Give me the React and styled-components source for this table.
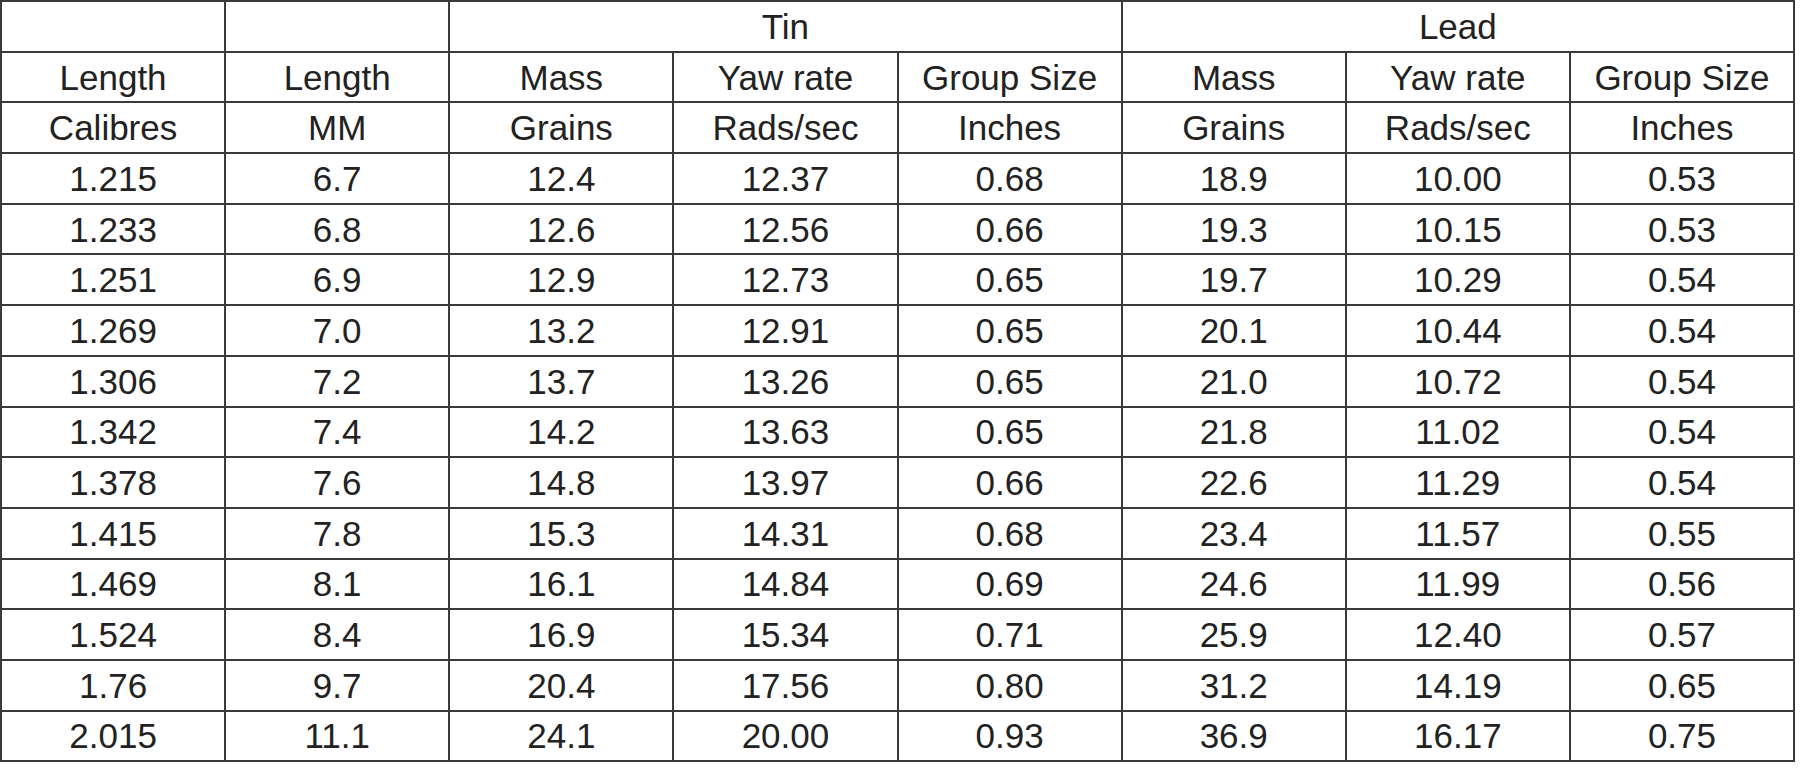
import React from 'react'
import styled, { createGlobalStyle } from 'styled-components'

const GlobalStyle = createGlobalStyle`
  html, body {
    margin: 0;
    padding: 0;
    background: #fff;
  }
  body {
    font-family: "Liberation Sans", Arial, sans-serif;
  }
`

const Page = styled.div`
  padding: 0 4px 0 0;
`

const Table = styled.table`
  width: 1795px;
  table-layout: fixed;
  border-collapse: collapse;
  border: 2px solid #333;
  font-family: "Liberation Sans", Arial, sans-serif;
  font-size: 35px;
  color: #222;
`

const Row = styled.tr`
  height: 50.7px;
`

const Cell = styled.td`
  border: 2px solid #3a3a3a;
  padding: 0;
  text-align: center;
  vertical-align: middle;
  line-height: 1;
  white-space: nowrap;
`

const groups = ['Tin', 'Lead']

const subHeads = [
  ['Length', 'Length', 'Mass', 'Yaw rate', 'Group Size', 'Mass', 'Yaw rate', 'Group Size'],
  ['Calibres', 'MM', 'Grains', 'Rads/sec', 'Inches', 'Grains', 'Rads/sec', 'Inches'],
]

const rows = [
  ['1.215', '6.7', '12.4', '12.37', '0.68', '18.9', '10.00', '0.53'],
  ['1.233', '6.8', '12.6', '12.56', '0.66', '19.3', '10.15', '0.53'],
  ['1.251', '6.9', '12.9', '12.73', '0.65', '19.7', '10.29', '0.54'],
  ['1.269', '7.0', '13.2', '12.91', '0.65', '20.1', '10.44', '0.54'],
  ['1.306', '7.2', '13.7', '13.26', '0.65', '21.0', '10.72', '0.54'],
  ['1.342', '7.4', '14.2', '13.63', '0.65', '21.8', '11.02', '0.54'],
  ['1.378', '7.6', '14.8', '13.97', '0.66', '22.6', '11.29', '0.54'],
  ['1.415', '7.8', '15.3', '14.31', '0.68', '23.4', '11.57', '0.55'],
  ['1.469', '8.1', '16.1', '14.84', '0.69', '24.6', '11.99', '0.56'],
  ['1.524', '8.4', '16.9', '15.34', '0.71', '25.9', '12.40', '0.57'],
  ['1.76', '9.7', '20.4', '17.56', '0.80', '31.2', '14.19', '0.65'],
  ['2.015', '11.1', '24.1', '20.00', '0.93', '36.9', '16.17', '0.75'],
]

export default function App() {
  return (
    <Page>
      <GlobalStyle />
      <Table>
        <colgroup>
          {Array.from({ length: 8 }).map((_, i) => <col key={i} />)}
        </colgroup>
        <tbody>
          <Row>
            <Cell />
            <Cell />
            {groups.map(g => <Cell key={g} colSpan={3}>{g}</Cell>)}
          </Row>
          {subHeads.map((r, i) => (
            <Row key={'h' + i}>
              {r.map((c, j) => <Cell key={j}>{c}</Cell>)}
            </Row>
          ))}
          {rows.map((r, i) => (
            <Row key={i}>
              {r.map((c, j) => <Cell key={j}>{c}</Cell>)}
            </Row>
          ))}
        </tbody>
      </Table>
    </Page>
  )
}
